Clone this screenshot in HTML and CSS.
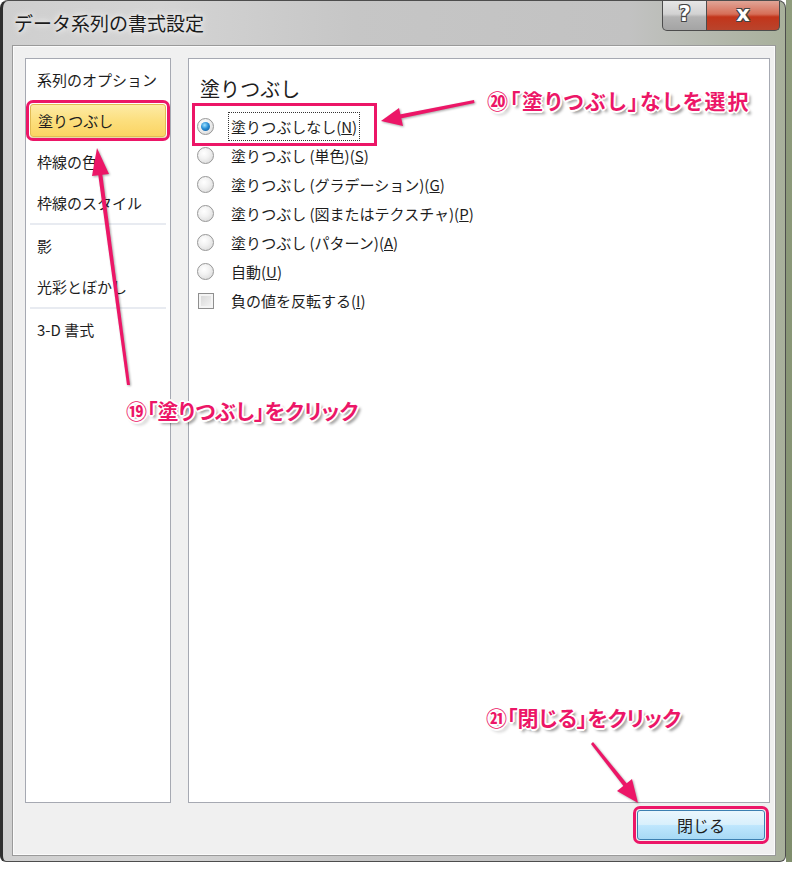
FILE: index.html
```html
<!DOCTYPE html>
<html lang="ja">
<head>
    <meta charset="UTF-8">
    <title>データ系列の書式設定</title>
    <link rel="stylesheet" href="styles.css">
</head>
<body>
    <div class="desk">
        <div class="window">
            <div class="titlebar">
                <span class="title">データ系列の書式設定</span>
                <div class="caption-buttons">
                    <div class="cap-btn help">?</div>
                    <div class="cap-btn close">x</div>
                </div>
            </div>
            <div class="client">
                <div class="panels">
                    <ul class="nav">
                        <li>系列のオプション</li>
                        <li class="active">塗りつぶし</li>
                        <li>枠線の色</li>
                        <li>枠線のスタイル</li>
                        <li class="sep"></li>
                        <li>影</li>
                        <li>光彩とぼかし</li>
                        <li class="sep"></li>
                        <li>3-D 書式</li>
                    </ul>
                    <div class="content">
                        <h3>塗りつぶし</h3>
                        <div class="options">
                            <div class="row"><span class="radio checked"></span><span class="label focus">塗りつぶしなし(<u>N</u>)</span></div>
                            <div class="row"><span class="radio"></span><span class="label">塗りつぶし (単色)(<u>S</u>)</span></div>
                            <div class="row"><span class="radio"></span><span class="label">塗りつぶし (グラデーション)(<u>G</u>)</span></div>
                            <div class="row"><span class="radio"></span><span class="label">塗りつぶし (図またはテクスチャ)(<u>P</u>)</span></div>
                            <div class="row"><span class="radio"></span><span class="label">塗りつぶし (パターン)(<u>A</u>)</span></div>
                            <div class="row"><span class="radio"></span><span class="label">自動(<u>U</u>)</span></div>
                            <div class="row"><span class="check"></span><span class="label">負の値を反転する(<u>I</u>)</span></div>
                        </div>
                    </div>
                </div>
                <div class="footer">
                    <button class="btn-close">閉じる</button>
                </div>
            </div>
        </div>
        <div class="side"></div>
    </div>

    <!-- annotations -->
    <div class="mark mark-row"></div>
    <svg class="arrows" width="792" height="870" viewBox="0 0 792 870">
        <g fill="#ec1667">
            <polygon points="474,100 474.5,103 398,119 397,115"/>
            <polygon points="381,121 403,126 399,108"/>
            <polygon points="127,385 130,385 102,172 98,173"/>
            <polygon points="97,148 109,174 92,176"/>
            <polygon points="591,744 593,742 628,785 625,788"/>
            <polygon points="638,803 632,779 617,791"/>
        </g>
    </svg>
    <div class="note note-20">⑳「塗りつぶし」なしを選択</div>
    <div class="note note-19">⑲「塗りつぶし」をクリック</div>
    <div class="note note-21">㉑「閉じる」をクリック</div>
</body>
</html>
```

FILE: styles.css
```css
body {
    margin: 0;
    background: #fff;
    font-family: "Noto Sans CJK JP", "Noto Sans", sans-serif;
    color: #1e1e1e;
    position: relative;
}
.desk {
    display: flex;
    height: 870px;
    align-items: flex-start;
}
.side {
    flex: 1;
    height: 862px;
    background: linear-gradient(180deg, #8f9c7d, #7f8d6c);
}
.window {
    width: 786px;
    height: 862px;
    box-sizing: border-box;
    border: 1px solid #4d4d4d;
    border-left: 3px solid #2e2e2e;
    border-radius: 8px 8px 6px 6px;
    background: linear-gradient(90deg, #cfcfcf 0%, #d4d4d4 20%, #c6c6c6 45%, #c2c2c2 80%, #a8b09b 100%);
    display: flex;
    flex-direction: column;
    padding: 0 9px 5px 9px;
}
.titlebar {
    height: 44px;
    display: flex;
    justify-content: space-between;
    align-items: flex-start;
}
.title {
    font-size: 19px;
    line-height: 44px;
    padding-left: 2px;
    color: #1b1b1b;
    text-shadow: 0 0 8px #fff, 0 0 4px #eee;
}
.caption-buttons {
    display: flex;
    margin-right: -4px;
}
.cap-btn {
    height: 29px;
    border: 1px solid #4c4c4c;
    border-top: none;
    font-family: "DejaVu Sans", sans-serif;
    font-weight: bold;
    color: #fff;
    text-align: center;
    line-height: 27px;
    text-shadow: -1px -1px 0 #444, 1px -1px 0 #444, -1px 1px 0 #444, 1px 1px 0 #444;
}
.help {
    width: 43px;
    border-radius: 0 0 0 5px;
    font-size: 21px;
    background: linear-gradient(180deg, #e6e6e6 0%, #d2d2d2 45%, #b3b3b3 55%, #a4a4a4 100%);
}
.close {
    width: 72px;
    border-left: none;
    border-radius: 0 0 5px 0;
    font-size: 21px;
    background: linear-gradient(180deg, #e0a597 0%, #d66e58 45%, #c2351b 55%, #b9442c 100%);
}
.client {
    flex: 1;
    background: #f0f0f0;
    border: 1px solid #9a9a9a;
    box-shadow: inset 0 0 0 1px #fbfbfb;
    padding: 12px 5px 0 12px;
    display: flex;
    flex-direction: column;
}
.panels {
    height: 745px;
    display: flex;
    gap: 17px;
}
.nav {
    width: 146px;
    box-sizing: border-box;
    margin: 0;
    padding: 0;
    list-style: none;
    background: #fff;
    border: 1px solid #a6a9b2;
    font-size: 15px;
}
.nav li {
    height: 41px;
    margin: 0 4px;
    padding-left: 7px;
    display: flex;
    align-items: center;
}
.nav li.active {
    height: 31px;
    margin: 4px 4px;
    border: 1px solid #e1bb53;
    border-radius: 3px;
    background: linear-gradient(180deg, #fdeba6 0%, #fcdf7e 50%, #fbd463 100%);
    box-shadow: 0 1px 0 #e8d7a8;
    outline: 3px solid #ec1667;
    outline-offset: 1px;
}
.nav li.sep {
    height: 0;
    border-top: 2px solid #e8ebf1;
    padding: 0;
}
.content {
    flex: 1;
    background: #fff;
    border: 1px solid #a6a9b2;
    padding: 15px 0 0 8px;
}
.content h3 {
    margin: 0 0 8px 3px;
    font-size: 20px;
    font-weight: normal;
    line-height: 30px;
}
.row {
    height: 29px;
    display: flex;
    align-items: center;
    font-size: 15px;
}
.label {
    margin-left: 14px;
    padding: 3px 2px;
    border: 1px dotted transparent;
}
.label.focus {
    border-color: #333;
}
.radio {
    width: 15px;
    height: 15px;
    border: 1px solid #979797;
    border-radius: 50%;
    background: radial-gradient(circle at 40% 35%, #fff 0%, #f2f2f2 40%, #d3d3d3 100%);
    display: flex;
    align-items: center;
    justify-content: center;
}
.radio.checked::after {
    content: "";
    width: 9px;
    height: 9px;
    border-radius: 50%;
    background: radial-gradient(circle at 40% 35%, #9fe2ff 0%, #2a8fd6 45%, #0c4d8c 100%);
}
.check {
    width: 14px;
    height: 14px;
    border: 1px solid #8f8f8f;
    background: linear-gradient(135deg, #d4d4d4, #f7f7f7);
    box-shadow: inset 0 0 0 2px #f4f4f4;
    margin-left: 1px;
}
.footer {
    display: flex;
    justify-content: flex-end;
    padding-top: 7px;
}
.btn-close {
    width: 128px;
    height: 30px;
    margin-right: 5px;
    border: 1px solid #3c7fb1;
    border-radius: 3px;
    background: linear-gradient(180deg, #eaf6fd 0%, #d9f0fc 48%, #bee6fd 52%, #a7d9f5 100%);
    font-family: "Noto Sans CJK JP", sans-serif;
    font-size: 16px;
    color: #1e1e1e;
    outline: 3px solid #ec1667;
    outline-offset: 1px;
}

/* annotations */
.mark {
    position: absolute;
    border: 3px solid #ec1667;
    box-sizing: border-box;
}
.mark-row {
    left: 192px;
    top: 103px;
    width: 185px;
    height: 43px;
}
.arrows {
    position: absolute;
    left: 0;
    top: 0;
    pointer-events: none;
    filter: drop-shadow(1px 1px 1px rgba(0, 0, 0, 0.35));
}
.note {
    position: absolute;
    font-size: 21px;
    font-weight: bold;
    line-height: 24px;
    color: #ec1667;
    white-space: nowrap;
    font-feature-settings: "palt";
    text-shadow: -1px -1px 0 #fff, 1px -1px 0 #fff, -1px 1px 0 #fff, 1px 1px 0 #fff,
        0 -2px 0 #fff, 0 2px 0 #fff, -2px 0 0 #fff, 2px 0 0 #fff,
        3px 3px 3px rgba(0, 0, 0, 0.45);
}
.note-20 {
    left: 487px;
    top: 88px;
    letter-spacing: 1.8px;
}
.note-19 {
    left: 126px;
    top: 398px;
}
.note-21 {
    left: 486px;
    top: 705px;
}
```
